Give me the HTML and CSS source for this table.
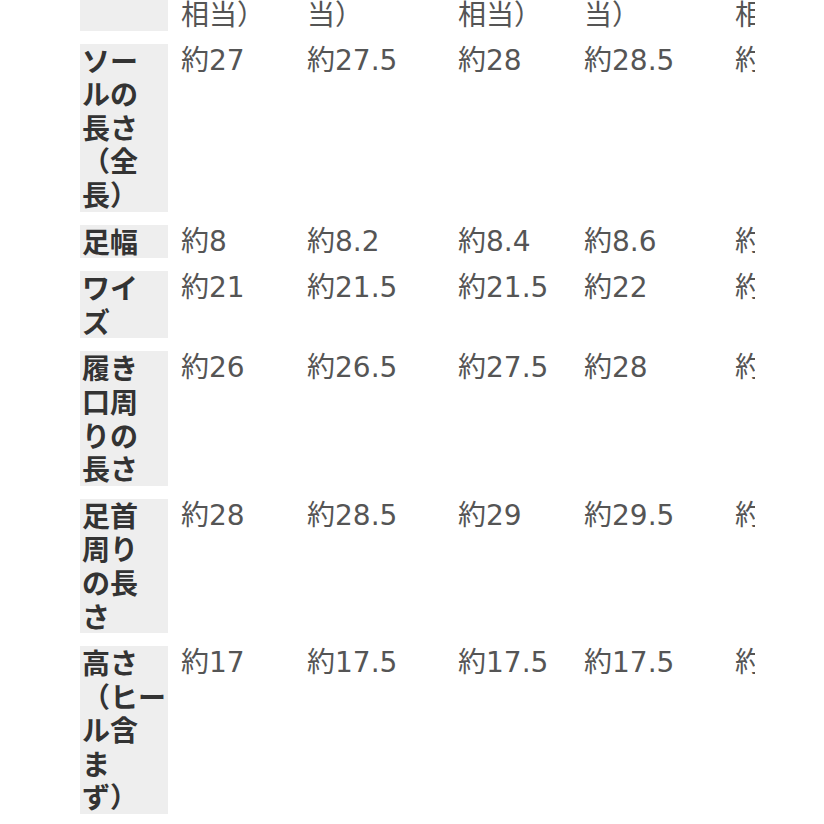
FILE: index.html
```html
<!DOCTYPE html>
<html lang="ja">
<head>
<meta charset="utf-8">
<title>サイズ表</title>
<link rel="stylesheet" href="styles.css">
</head>
<body>
<div class="scroller">
  <table class="size-table">
    <colgroup>
      <col class="c-head">
      <col class="c-narrow">
      <col class="c-wide">
      <col class="c-narrow">
      <col class="c-wide">
      <col class="c-narrow">
    </colgroup>
    <tr class="head-row">
      <th></th>
      <td>相当）</td>
      <td>当）</td>
      <td>相当）</td>
      <td>当）</td>
      <td>相当）</td>
    </tr>
    <tr>
      <th>ソールの長さ（全長）</th>
      <td>約27</td><td>約27.5</td><td>約28</td><td>約28.5</td><td>約29</td>
    </tr>
    <tr>
      <th>足幅</th>
      <td>約8</td><td>約8.2</td><td>約8.4</td><td>約8.6</td><td>約8.8</td>
    </tr>
    <tr>
      <th>ワイズ</th>
      <td>約21</td><td>約21.5</td><td>約21.5</td><td>約22</td><td>約22.5</td>
    </tr>
    <tr>
      <th>履き口周りの長さ</th>
      <td>約26</td><td>約26.5</td><td>約27.5</td><td>約28</td><td>約28.5</td>
    </tr>
    <tr>
      <th>足首周りの長さ</th>
      <td>約28</td><td>約28.5</td><td>約29</td><td>約29.5</td><td>約30</td>
    </tr>
    <tr>
      <th>高さ（ヒール含まず）</th>
      <td>約17</td><td>約17.5</td><td>約17.5</td><td>約17.5</td><td>約18</td>
    </tr>
  </table>
</div>
</body>
</html>
```
FILE: styles.css
```css
html, body {
  margin: 0;
  padding: 0;
  background: #ffffff;
}

.scroller {
  width: 686px;
  margin: -16px 0 0 69px;
  overflow: hidden;
}

.size-table {
  border-collapse: separate;
  border-spacing: 11px 13px;
  table-layout: fixed;
  width: 790px;
  font-size: 28px;
  line-height: 33.6px;
  line-break: strict;
  text-spacing-trim: space-all;
}

.c-head { width: 88px; }
.c-narrow { width: 115px; }
.c-wide { width: 140px; }

.size-table th,
.size-table td {
  padding: 0 2px;
  vertical-align: top;
  text-align: left;
}

.size-table th {
  background: #eeeeee;
  color: #333333;
  font-family: "Noto Sans CJK JP", sans-serif;
  font-weight: 700;
  padding-right: 6px;
}

.size-table td {
  color: #555555;
  font-family: "DejaVu Sans", "Noto Sans CJK JP", sans-serif;
  font-weight: 400;
  white-space: nowrap;
  overflow: hidden;
}

.head-row td {
  font-family: "Noto Sans CJK JP", sans-serif;
}
```
